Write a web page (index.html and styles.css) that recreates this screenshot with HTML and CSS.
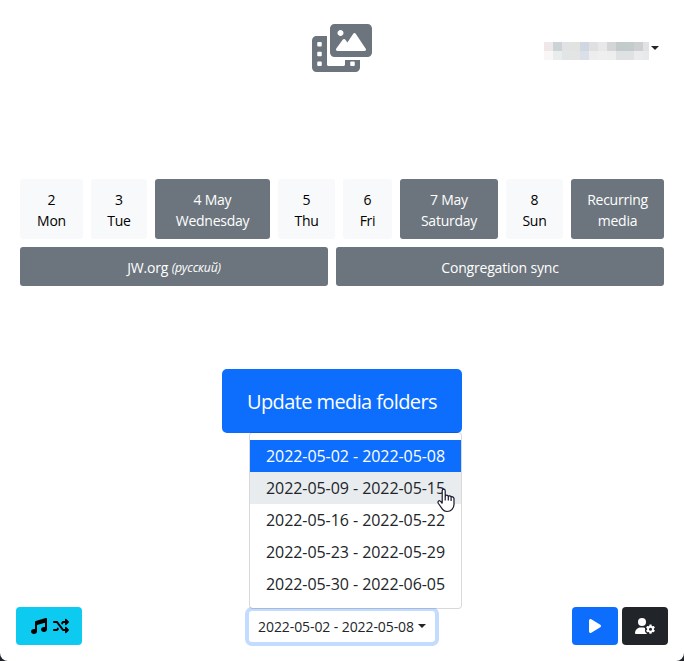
FILE: index.html
```html
<!DOCTYPE html>
<html lang="en">
<head>
<meta charset="utf-8">
<title>Media folders</title>
<link rel="stylesheet" href="styles.css">
</head>
<body>
<div class="window">
  <header class="header">
    <span></span>
    <svg class="logo" viewBox="0 0 640 512"><path d="M352 432c0 8.836-7.164 16-16 16H176c-8.838 0-16-7.164-16-16L160 128H48C21.49 128 0 149.5 0 176v288c0 26.51 21.49 48 48 48h416c26.51 0 48-21.49 48-48L512 384h-160L352 432zM104 439c0 4.969-4.031 9-9 9h-30c-4.969 0-9-4.031-9-9v-30c0-4.969 4.031-9 9-9h30c4.969 0 9 4.031 9 9V439zM104 335c0 4.969-4.031 9-9 9h-30c-4.969 0-9-4.031-9-9v-30c0-4.969 4.031-9 9-9h30c4.969 0 9 4.031 9 9V335zM104 231c0 4.969-4.031 9-9 9h-30c-4.969 0-9-4.031-9-9v-30C56 196 60.03 192 65 192h30c4.969 0 9 4.031 9 9V231zM408 409c0-4.969 4.031-9 9-9h30c4.969 0 9 4.031 9 9v30c0 4.969-4.031 9-9 9h-30c-4.969 0-9-4.031-9-9V409zM592 0H240C213.500 0 192 21.490 192 48v256c0 26.510 21.490 48 48 48h352c26.510 0 48-21.490 48-48v-256C640 21.490 618.500 0 592 0zM304 64c17.680 0 32 14.330 32 32s-14.320 32-32 32C286.300 128 272 113.700 272 96S286.300 64 304 64zM574.100 279.600C571.300 284.800 565.900 288 560 288H272C266 288 260.500 284.600 257.700 279.300C255 273.900 255.500 267.400 259.100 262.600l70-96C332.100 162.400 336.900 160 342 160c5.110 0 9.914 2.441 12.930 6.574l22.350 30.660l62.740-94.110C442.900 98.670 447.900 96 453.300 96c5.348 0 10.340 2.672 13.310 7.125l106.700 160C576.600 268 576.900 274.300 574.100 279.600z"/></svg>
    <div class="account">
      <svg class="account-name" viewBox="0 0 105 18" shape-rendering="crispEdges">
        <rect x="0" width="9" height="9" fill="#f0e8e8"/><rect x="9" width="9" height="9" fill="#cbd3d7"/><rect x="18" width="9" height="9" fill="#e1e2e3"/><rect x="27" width="9" height="9" fill="#e0e3df"/><rect x="36" width="9" height="9" fill="#d0d7e2"/><rect x="45" width="9" height="9" fill="#e0e0e2"/><rect x="54" width="9" height="9" fill="#e8e7e9"/><rect x="63" width="9" height="9" fill="#d4d5d6"/><rect x="72" width="9" height="9" fill="#c2cacb"/><rect x="81" width="9" height="9" fill="#c2cccd"/><rect x="90" width="9" height="9" fill="#cecfd1"/><rect x="99" width="6" height="9" fill="#e1e2e4"/>
        <rect x="0" y="9" width="9" height="9" fill="#f8f6f7"/><rect x="9" y="9" width="9" height="9" fill="#e8ecea"/><rect x="18" y="9" width="9" height="9" fill="#e2e5e5"/><rect x="27" y="9" width="9" height="9" fill="#e5e4e5"/><rect x="36" y="9" width="9" height="9" fill="#dbe0e8"/><rect x="45" y="9" width="9" height="9" fill="#ededed"/><rect x="54" y="9" width="9" height="9" fill="#efefef"/><rect x="63" y="9" width="9" height="9" fill="#eeeeed"/><rect x="72" y="9" width="18" height="9" fill="#dfe1e3"/><rect x="90" y="9" width="9" height="9" fill="#eaebef"/><rect x="99" y="9" width="6" height="9" fill="#e8e9ea"/>
      </svg>
      <i class="caret"></i>
    </div>
  </header>

  <main class="schedule">
    <div class="days">
      <div class="tile light">2<br>Mon</div>
      <div class="tile light">3<br>Tue</div>
      <div class="tile">4 May<br>Wednesday</div>
      <div class="tile light">5<br>Thu</div>
      <div class="tile light">6<br>Fri</div>
      <div class="tile">7 May<br>Saturday</div>
      <div class="tile light">8<br>Sun</div>
      <div class="tile">Recurring<br>media</div>
    </div>
    <div class="sources">
      <div class="tile">JW.org&nbsp;<em>(русский)</em></div>
      <div class="tile">Congregation sync</div>
    </div>
  </main>

  <button class="update"><span>Update media folders</span></button>

  <footer class="footer">
    <button class="btn music">
      <svg viewBox="0 0 512 512"><path d="M512 368c0 44.180-43 80-96 80s-96-35.820-96-80s43-80 96-80c11.280 0 21.950 1.920 32 4.898V148.100L192 224v208C192 476.200 149 512 96 512S0 476.200 0 432s43-80 96-80c11.280 0 21.950 1.920 32 4.898V126.500c0-12.970 10.060-26.630 22.410-30.520l320-94.490C472.100.6615 477.300 0 480 0c17.660 0 32 14.340 32 32V368z"/></svg>
      <svg viewBox="0 0 512 512"><path d="M425 287c-15.130-15.120-41-4.426-41 16.970V352H336L153.600 108.800C147.600 100.800 138.100 96 128 96H32C14.310 96 0 110.300 0 128s14.310 32 32 32h80l182.400 243.200C300.400 411.300 309.900 416 320 416h64v47.940c0 21.390 25.860 32.120 41 17l80-79.980c9.387-9.387 9.387-24.590 0-33.970L425 287zM336 160h48v48.030c0 21.390 25.870 32.090 41 16.970l80-79.980c9.387-9.391 9.385-24.590 0-33.970l-80-79.980c-15.130-15.120-41-4.391-41 17V96H320c-10.060 0-19.560 4.750-25.590 12.810L254 162.700L294 216L336 160zM112 352H32c-17.690 0-32 14.310-32 32s14.310 32 32 32h96c10.060 0 19.560-4.750 25.590-12.810l40.400-53.870L154 296L112 352z"/></svg>
    </button>
    <div class="week">
      <button class="week-toggle"><span>2022-05-02 - 2022-05-08</span><i class="caret"></i></button>
      <ul class="menu">
        <li class="active">2022-05-02 - 2022-05-08</li>
        <li class="hover">2022-05-09 - 2022-05-15</li>
        <li>2022-05-16 - 2022-05-22</li>
        <li>2022-05-23 - 2022-05-29</li>
        <li>2022-05-30 - 2022-06-05</li>
      </ul>
      <svg class="pointer" viewBox="0 0 18 25"><path d="M5.200 15.500V3Q5.200 1.200 6.700 1.200T8.200 3V8.500Q8.500 7.200 9.800 7.200T11.300 8.700Q11.600 7.700 12.800 7.800T14.100 9.300Q14.500 8.500 15.600 8.800T17 10.500V16.500Q17 19.500 14.800 21.700Q13.200 23.500 10 23.500Q7 23.500 5.400 21.200L1.400 15.500Q.5 13.900 1.600 13T3.900 13.700L5.200 15.500M8.200 8V12.500M11.300 8.700V12.500M14.100 9.300V13"/></svg>
    </div>
    <div class="actions">
      <button class="btn play"><svg viewBox="0 0 384 512"><path d="M361 215C375.300 223.800 384 239.300 384 256C384 272.700 375.300 288.200 361 297L73 472.100C58.210 482 39.660 482.400 24.520 473.900C9.377 465.400 0 449.400 0 432V80C0 62.640 9.377 46.630 24.520 38.130C39.660 29.640 58.210 29.990 73 39L361 215z"/></svg></button>
      <button class="btn settings"><svg viewBox="0 0 640 512"><circle cx="224" cy="128" r="128"/><path d="M320 320Q298 304 270 304H178C80 304 0 384 0 482Q0 512 30 512H392Q336 480 314 418Q305 402 330 380Q312 350 320 320z"/><path fill-rule="evenodd" d="M464 210h64l9 42 26 15 41-13 32 55-32 29v36l32 29-32 55-41-13-26 15-9 42h-64l-9-42-26-15-41 13-32-55 32-29v-36l-32-29 32-55 41 13 26-15zM496 308a48 48 0 1 0 0 96a48 48 0 1 0 0-96z"/></svg></button>
    </div>
  </footer>
</div>
</body>
</html>
```

FILE: styles.css
```css
* { box-sizing: border-box; }

body {
  margin: 0;
  background: #20232a;
  font-family: "Open Sans", "Noto Sans", sans-serif;
  font-size: 14px;
  line-height: 21px;
  color: #212529;
}

button {
  border: 0;
  padding: 0;
  font: inherit;
  color: inherit;
}

.window {
  height: 661px;
  padding: 24px 16px 16px;
  display: flex;
  flex-direction: column;
  background: #fff;
  border-radius: 0 0 8px 8px;
}

.header {
  display: grid;
  grid-template-columns: 1fr auto 1fr;
  height: 48px;
}

.logo { width: 60px; height: 48px; fill: #6c757d; }

.account {
  justify-self: end;
  display: flex;
  align-items: center;
  gap: 2px;
  padding-right: 9px;
  height: 48px;
  padding-top: 6px;
}

.account-name { width: 105px; height: 18px; }
.account .caret { margin-bottom: 6px; }

.caret {
  border: 4px solid transparent;
  border-top-color: #212529;
  border-bottom: 0;
}

.schedule {
  margin: 107px 4px 0;
  display: grid;
  gap: 8px;
}

.days, .sources { display: grid; gap: 8px; }
.days { grid-template-columns: 63fr 56fr 115fr 57fr 49fr 98fr 57fr 93fr; height: 60px; }
.sources { grid-template-columns: 308fr 328fr; height: 39px; }

.tile {
  display: flex;
  align-items: center;
  justify-content: center;
  padding-top: 2px;
  text-align: center;
  min-width: 0;
  white-space: nowrap;
  border-radius: 3px;
  background: #6c757d;
  color: #fff;
  letter-spacing: -0.25px;
}

.sources .tile { letter-spacing: -0.18px; }
.tile.light { background: #f8f9fa; color: #000; }
.tile em { font-size: 12.25px; }

.update {
  align-self: center;
  margin-top: 83px;
  width: 240px;
  height: 64px;
  border-radius: 5px;
  background: #0d6efd;
  color: #fff;
  font-size: 20px;
  letter-spacing: -0.6px;
  white-space: nowrap;
}

.footer {
  margin-top: auto;
  display: grid;
  grid-template-columns: 1fr auto 1fr;
  align-items: center;
  height: 38px;
}

.btn {
  height: 38px;
  border-radius: 4px;
  display: flex;
  align-items: center;
  justify-content: center;
}

.btn svg { height: 16px; fill: currentColor; }
.music { width: 66px; gap: 6px; padding-left: 2px; background: #0dcaf0; color: #000; }
.play { width: 46px; background: #0d6efd; color: #fff; }
.settings { width: 46px; background: #212529; color: #fff; }
.actions { justify-self: end; display: flex; gap: 4px; }

.week { position: relative; }

.week-toggle {
  display: flex;
  align-items: center;
  justify-content: center;
  gap: 4px;
  width: 186px;
  height: 31px;
  border-radius: 3px;
  background: #fff;
  box-shadow: 0 0 0 4px #c2dbfe;
  white-space: nowrap;
  letter-spacing: -0.09px;
}

.menu {
  position: absolute;
  left: 0;
  bottom: 33px;
  width: 213px;
  margin: 0;
  padding: 7px 0 8px;
  list-style: none;
  background: #fff;
  background-clip: padding-box;
  border: 1px solid rgba(0, 0, 0, 0.15);
  border-radius: 4px;
  font-size: 16px;
  line-height: 32px;
  letter-spacing: -0.06px;
  white-space: nowrap;
}

.menu li { padding: 0 16px; }
.menu .active { background: #0d6efd; color: #fff; }
.menu .hover { background: #e9ecef; }

.pointer {
  position: absolute;
  left: 188px;
  bottom: 129px;
  width: 18px;
  height: 25px;
  fill: #fff;
  stroke: #17172b;
  stroke-width: 1.2;
  stroke-linejoin: round;
}
```
